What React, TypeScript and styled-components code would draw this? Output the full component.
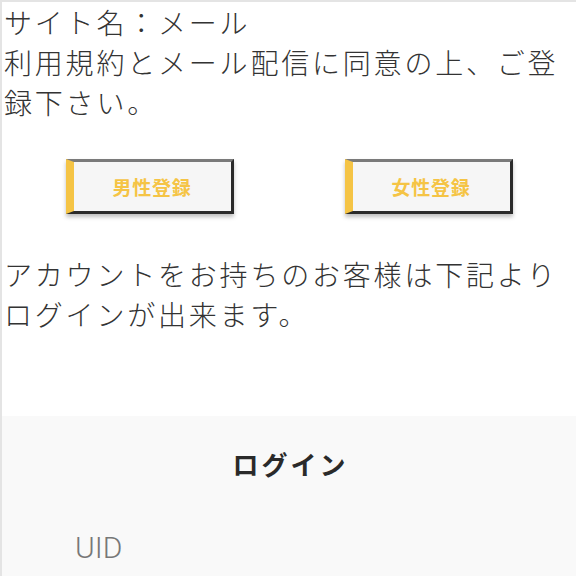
import React from 'react';
import styled, { createGlobalStyle } from 'styled-components';

const GlobalStyle = createGlobalStyle`
  html, body {
    margin: 0;
    padding: 0;
    background: #fff;
  }
  body {
    font-family: "Noto Sans CJK JP", "Noto Sans", sans-serif;
    color: #333;
  }
`;

const Page = styled.div`
  min-height: 576px;
  box-sizing: border-box;
  border-top: 2px solid #e4e4e4;
  border-left: 2px solid #e4e4e4;
  background: #fff;
  overflow: hidden;
`;

const Text = styled.p<{ $top?: number }>`
  margin: ${p => p.$top ?? 0}px 0 0;
  padding: 0 2px;
  font-size: 28px;
  font-weight: 300;
  line-height: 40px;
  letter-spacing: 2.8px;
  color: #333;
`;

const ButtonRow = styled.div`
  display: flex;
  justify-content: center;
  gap: 111px;
  margin-top: 37px;
`;

const RegisterButton = styled.button`
  width: 168px;
  height: 55px;
  box-sizing: border-box;
  padding: 0;
  background: #f6f6f6;
  border-style: solid;
  border-width: 3px 3px 3px 8px;
  border-color: #7a7a7a #2b2b2b #2b2b2b #f5c445;
  box-shadow: 0 3px 4px rgba(0, 0, 0, 0.25);
  font-family: "Noto Sans CJK JP", sans-serif;
  font-size: 19px;
  font-weight: 700;
  letter-spacing: 0.8px;
  color: #f5c445;
  cursor: pointer;
`;

const LoginPanel = styled.section`
  margin-top: 82px;
  padding: 28px 0 40px;
  background: #f9f9f9;
`;

const LoginTitle = styled.h2`
  margin: 0;
  padding-left: 3px;
  text-align: center;
  font-size: 26px;
  line-height: 40px;
  letter-spacing: 3px;
  font-weight: 700;
  color: #2a2a2a;
`;

const FieldLabel = styled.label`
  display: block;
  margin-top: 44px;
  padding-left: 73px;
  font-family: Roboto, "Liberation Sans", sans-serif;
  font-weight: 300;
  font-size: 30px;
  line-height: 40px;
  color: #777;
`;

export default function App() {
  return (
    <>
      <GlobalStyle />
      <Page>
        <Text>
          サイト名：メール
          <br />
          利用規約とメール配信に同意の上、ご登録下さい。
        </Text>
        <ButtonRow>
          <RegisterButton>男性登録</RegisterButton>
          <RegisterButton>女性登録</RegisterButton>
        </ButtonRow>
        <Text $top={40}>アカウントをお持ちのお客様は下記よりログインが出来ます。</Text>
        <LoginPanel>
          <LoginTitle>ログイン</LoginTitle>
          <FieldLabel>UID</FieldLabel>
        </LoginPanel>
      </Page>
    </>
  );
}
